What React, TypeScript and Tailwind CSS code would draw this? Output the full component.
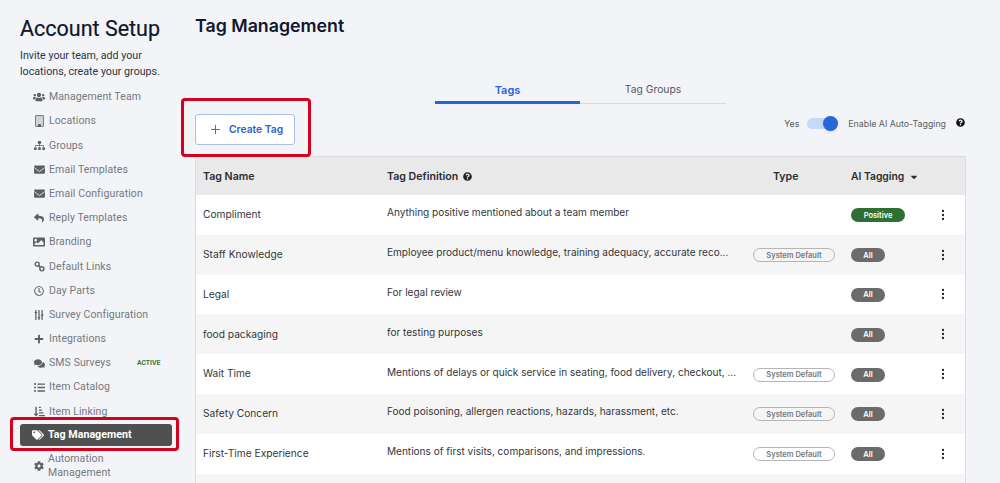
import {
  FaUsers, FaSitemap, FaEnvelope, FaReply, FaImage, FaRegClock, FaSlidersH, FaPlus,
  FaComments, FaListUl, FaSortAmountDownAlt, FaTags, FaCog, FaQuestionCircle, FaCaretDown,
} from "react-icons/fa";
import type { ReactNode } from "react";

function LinkIcon() {
  return (
    <svg viewBox="0 0 14 14" className="w-[11px] h-[11px]" fill="none" stroke="currentColor" strokeWidth="1.8">
      <circle cx="4" cy="4" r="2.6" />
      <circle cx="10" cy="10" r="2.6" />
      <path d="M6 6l2 2" />
    </svg>
  );
}

function LocationIcon() {
  return (
    <svg viewBox="0 0 10 13" className="w-[9px] h-[12px]">
      <rect x="0.5" y="0.5" width="9" height="12" rx="0.5" fill="#d2d3d6" stroke="#6a6c71" />
      <rect x="3.5" y="10" width="3" height="3" fill="#55575c" />
    </svg>
  );
}

function Kebab() {
  return (
    <svg viewBox="0 0 6 12" className="w-[6px] h-[12px] text-[#222]" fill="currentColor">
      <circle cx="3" cy="2" r="1.15" />
      <circle cx="3" cy="6" r="1.15" />
      <circle cx="3" cy="10" r="1.15" />
    </svg>
  );
}

const nav: { label: string; icon: ReactNode; badge?: string }[] = [
  { label: "Management Team", icon: <FaUsers size={12} /> },
  { label: "Locations", icon: <LocationIcon /> },
  { label: "Groups", icon: <FaSitemap size={11} /> },
  { label: "Email Templates", icon: <FaEnvelope size={11} /> },
  { label: "Email Configuration", icon: <FaEnvelope size={11} /> },
  { label: "Reply Templates", icon: <FaReply size={10} /> },
  { label: "Branding", icon: <FaImage size={12} /> },
  { label: "Default Links", icon: <LinkIcon /> },
  { label: "Day Parts", icon: <FaRegClock size={10} /> },
  { label: "Survey Configuration", icon: <FaSlidersH size={10} className="rotate-90" /> },
  { label: "Integrations", icon: <FaPlus size={10} /> },
  { label: "SMS Surveys", icon: <FaComments size={11} />, badge: "ACTIVE" },
  { label: "Item Catalog", icon: <FaListUl size={11} /> },
  { label: "Item Linking", icon: <FaSortAmountDownAlt size={11} /> },
];

const rows = [
  { name: "Compliment", def: "Anything positive mentioned about a team member", sys: false, tag: "Positive" },
  { name: "Staff Knowledge", def: "Employee product/menu knowledge, training adequacy, accurate reco...", sys: true, tag: "All" },
  { name: "Legal", def: "For legal review", sys: false, tag: "All" },
  { name: "food packaging", def: "for testing purposes", sys: false, tag: "All" },
  { name: "Wait Time", def: "Mentions of delays or quick service in seating, food delivery, checkout, ...", sys: true, tag: "All" },
  { name: "Safety Concern", def: "Food poisoning, allergen reactions, hazards, harassment, etc.", sys: true, tag: "All" },
  { name: "First-Time Experience", def: "Mentions of first visits, comparisons, and impressions.", sys: true, tag: "All" },
];

export default function App() {
  return (
    <div className="relative flex w-[1000px] h-[483px] overflow-hidden bg-[#f3f4f7] font-['Inter',sans-serif]">
      <aside className="w-[195px] shrink-0 pl-5 pt-[15px] pr-[23px] font-['Roboto',sans-serif]">
        <h1 className="text-[21.5px] leading-[28px] font-normal text-[#10172e] whitespace-nowrap [-webkit-text-stroke:0.2px_#10172e]">Account Setup</h1>
        <p className="mt-[5px] text-[10.7px] leading-[15.5px] text-[#2e3545] whitespace-nowrap">
          Invite your team, add your
          <br />
          locations, create your groups.
        </p>
        <nav className="mt-[6px] flex flex-col">
          {nav.map((n) => (
            <div key={n.label} className="flex items-center h-[24.2px] pl-[11px] text-[#75787e]">
              <span className="w-[16px] flex justify-center shrink-0 text-[#5d5f64]">{n.icon}</span>
              <span className="ml-[2px] text-[10.5px] tracking-[0.1px] whitespace-nowrap">{n.label}</span>
              {n.badge && <span className="ml-[26px] text-[6.8px] font-bold text-[#3c7a3c]">{n.badge}</span>}
            </div>
          ))}
          <div className="flex items-center h-[22px] rounded-[3px] bg-[#505050] pl-[10px] text-white">
            <span className="w-[16px] flex justify-center shrink-0"><FaTags size={12} /></span>
            <span className="ml-[2px] text-[10.7px] font-bold whitespace-nowrap">Tag Management</span>
          </div>
          <div className="flex items-center mt-[6px] pl-[11px] text-[#75787e]">
            <span className="w-[16px] flex justify-center shrink-0 text-[#5d5f64]"><FaCog size={10} /></span>
            <span className="ml-[1px] text-[10.5px] leading-[14.5px] tracking-[0.1px]">Automation<br />Management</span>
          </div>
        </nav>
      </aside>

      <main className="w-[771px] shrink-0">
        <h2 className="mt-[14px] text-[17.8px] leading-[24px] font-semibold text-[#10172e]">Tag Management</h2>

        <div className="mt-[40px] ml-[240px] flex w-[291px] text-[11px] font-semibold">
          <div className="w-[145px] h-[26px] text-center text-[#2563d9] border-b-[3px] border-[#2563d9] pt-[4px]">Tags</div>
          <div className="w-[146px] h-[26px] text-center text-[10.3px] font-normal text-[#55585f] border-b border-[#d8d9dc] pt-[4px]">Tag Groups</div>
        </div>

        <div className="flex items-center justify-between h-[43px] mt-[4px]">
          <button className="flex items-center w-[100px] h-[31px] pl-[15px] rounded-[3px] border border-[#a9c0ea] bg-white text-[#2f62c9] text-[10.3px] font-semibold">
            <svg viewBox="0 0 10 10" className="w-[9px] h-[9px]" stroke="currentColor" fill="none"><path d="M5 0v10M0 5h10" /></svg>
            <span className="ml-[9px]">Create Tag</span>
          </button>
          <div className="flex items-center mr-[1px] mb-[12px] text-[#5d5f64] text-[8.8px]">
            <span className="text-[#55585f]">Yes</span>
            <span className="relative ml-[8px] w-[31px] h-[11px] rounded-full bg-[#c5d9f8]">
              <span className="absolute right-[0px] -top-[2px] w-[15px] h-[15px] rounded-full bg-[#2b66d9] shadow" />
            </span>
            <span className="ml-[10px]">Enable AI Auto-Tagging</span>
            <FaQuestionCircle size={9} className="ml-[10px] text-[#111] -mt-[3px]" />
          </div>
        </div>

        <div className="mt-[5px] border border-[#dcdcdc] border-b-0 bg-white">
          <div className="flex items-center h-[38px] pt-[1px] bg-[#e9e9e9] text-[10.6px] font-semibold text-[#2a2d33]">
            <div className="w-[191px] pl-[7px]">Tag Name</div>
            <div className="flex items-center w-[386px] gap-[5px]">Tag Definition <FaQuestionCircle size={9} className="text-[#222]" /></div>
            <div className="w-[78px]">Type</div>
            <div className="flex items-center gap-[5px] text-[10.3px]">AI Tagging <FaCaretDown size={10} /></div>
          </div>
          {rows.map((r, i) => (
            <div key={r.name} className={`flex items-center h-[39.8px] text-[#33363c] ${i % 2 ? "bg-[#f5f5f5]" : "bg-white"}`}>
              <div className="w-[191px] pl-[7px] text-[10.2px] whitespace-nowrap">{r.name}</div>
              <div className="w-[366px] pr-[2px] text-[10.05px] -mt-[4px] whitespace-nowrap overflow-hidden">{r.def}</div>
              <div className="w-[98px] pt-[1px]">
                {r.sys && (
                  <span className="flex items-center justify-center w-[82px] h-[14px] rounded-full border border-[#b5b5b5] text-[7.5px] font-semibold text-[#76787c]">
                    System Default
                  </span>
                )}
              </div>
              <div className="w-[89px] pt-[1px]">
                <span className={`flex items-center justify-center h-[14px] rounded-full text-[7.5px] font-semibold text-white ${r.tag === "Positive" ? "w-[54px] bg-[#2f6f33]" : "w-[34px] bg-[#6b6b6b]"}`}>
                  {r.tag}
                </span>
              </div>
              <Kebab />
            </div>
          ))}
          <div className="h-[39.8px] bg-[#f5f5f5]" />
        </div>
      </main>

      <div className="absolute left-[181px] top-[98px] w-[130px] h-[59px] rounded-[4px] border-[3px] border-[#d5001c]" />
      <div className="absolute left-[10px] top-[417px] w-[169px] h-[34px] rounded-[4px] border-[3px] border-[#d5001c]" />
    </div>
  );
}
